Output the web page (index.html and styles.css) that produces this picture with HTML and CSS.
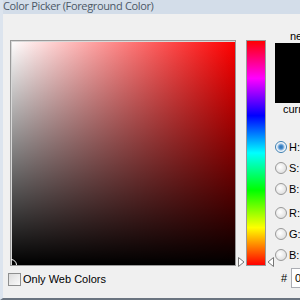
FILE: index.html
```html
<!DOCTYPE html>
<html>
<head>
  <title>Color Picker</title>
  <link rel="stylesheet" href="styles.css">
</head>
<body>
  <div class="window">
    <div class="titlebar">Color Picker (Foreground Color)</div>
    <div class="main">
      <div class="field-col">
        <div class="picker">
          <div class="field">
            <div class="marker"></div>
          </div>
          <div class="hue"></div>
          <svg class="arrow arrow-left" width="7" height="10" viewBox="0 0 7 10">
            <path d="M0.5 0.5 L6 5 L0.5 9.5 Z" fill="#fff" stroke="#777"/>
          </svg>
          <svg class="arrow arrow-right" width="7" height="10" viewBox="0 0 7 10">
            <path d="M6.5 0.5 L1 5 L6.5 9.5 Z" fill="#fff" stroke="#777"/>
          </svg>
        </div>
        <label class="webonly"><span class="check"></span>Only Web Colors</label>
      </div>
      <div class="side">
        <div class="swatch-label">new</div>
        <div class="swatch"></div>
        <div class="swatch-label">current</div>
        <div class="modes">
          <div class="group">
            <div class="mode"><span class="radio on"></span>H:</div>
            <div class="mode"><span class="radio"></span>S:</div>
            <div class="mode"><span class="radio"></span>B:</div>
          </div>
          <div class="group">
            <div class="mode"><span class="radio"></span>R:</div>
            <div class="mode"><span class="radio"></span>G:</div>
            <div class="mode"><span class="radio"></span>B:</div>
          </div>
        </div>
        <div class="hex"><span class="hash">#</span><span class="hexbox">0</span></div>
      </div>
    </div>
  </div>
</body>
</html>
```

FILE: styles.css
```css
body { margin: 0; font-family: "Liberation Sans", Arial, sans-serif; font-size: 11px; color: #000; }
.window {
  width: 300px; height: 300px;
  overflow: hidden;
  background: #f0f0f0;
  border-left: 3px solid #dce4ee;
  border-bottom: 2px solid #6a7480;
  box-sizing: border-box;
  display: flex; flex-direction: column;
}
.titlebar {
  height: 14px;
  margin-left: -3px;
  padding-left: 3px;
  background: #d3dde9;
  color: #4c5866;
  font-family: "Open Sans", sans-serif;
  font-size: 11px;
  letter-spacing: -0.35px;
  line-height: 11px;
  white-space: nowrap;
}
.main {
  display: flex;
  padding: 16px 0 0 7px;
}
.field-col { display: flex; flex-direction: column; }
.picker {
  position: relative;
  display: flex;
  margin-top: 10px;
}
.field {
  position: relative;
  overflow: hidden;
  width: 224px; height: 224px;
  border: 1px solid #9a9a9a;
  box-shadow: inset 1px 1px 0 #d8d8d8;
  background:
    linear-gradient(to top, #000, rgba(0,0,0,0)),
    linear-gradient(to right, #fff, #f00);
}
.marker {
  position: absolute;
  left: -6px; bottom: -6px;
  width: 10px; height: 10px;
  border: 1px solid #fff;
  border-radius: 50%;
}
.hue {
  margin-left: 10px;
  width: 18px; height: 224px;
  border: 1px solid #9a9a9a;
  background: linear-gradient(to bottom, #f00, #f0f, #00f, #0ff, #0f0, #ff0, #f00);
}
.arrow { position: absolute; bottom: -1px; }
.arrow-left { left: 228px; }
.arrow-right { left: 257px; }
.webonly {
  display: flex; align-items: center;
  gap: 2px;
  margin-top: 7px;
  margin-left: -2px;
  line-height: 13px;
}
.check {
  width: 11px; height: 11px;
  border: 1px solid #8e8f8f;
  background: linear-gradient(135deg, #dcdcdc, #fbfbfb);
}
.side {
  margin-left: 9px;
  width: 50px;
  display: flex; flex-direction: column;
  flex-shrink: 0;
}
.swatch-label { text-align: center; height: 13px; line-height: 13px; }
.swatch { height: 60px; background: #000; }
.modes {
  margin-top: 20px;
  display: flex; flex-direction: column; gap: 3px;
}
.mode {
  height: 21px;
  display: flex; align-items: center; gap: 2px;
}
.radio {
  width: 10px; height: 10px;
  border: 1px solid #9a9a9a;
  border-radius: 50%;
  background: radial-gradient(circle at 40% 40%, #fff, #d6d6d6);
}
.radio.on {
  background: radial-gradient(circle, #2a6fb0 0, #4a90d0 2px, #e8eef5 4px, #fff 5px);
  border-color: #3c7fb1;
}
.hex {
  margin-top: 3px;
  display: flex; align-items: center;
}
.hash { width: 14px; text-align: center; margin-left: 2px; }
.hexbox {
  height: 18px; flex: 1;
  border: 1px solid #abadb3;
  background: #fff;
  padding-left: 3px;
  line-height: 18px;
}
```
